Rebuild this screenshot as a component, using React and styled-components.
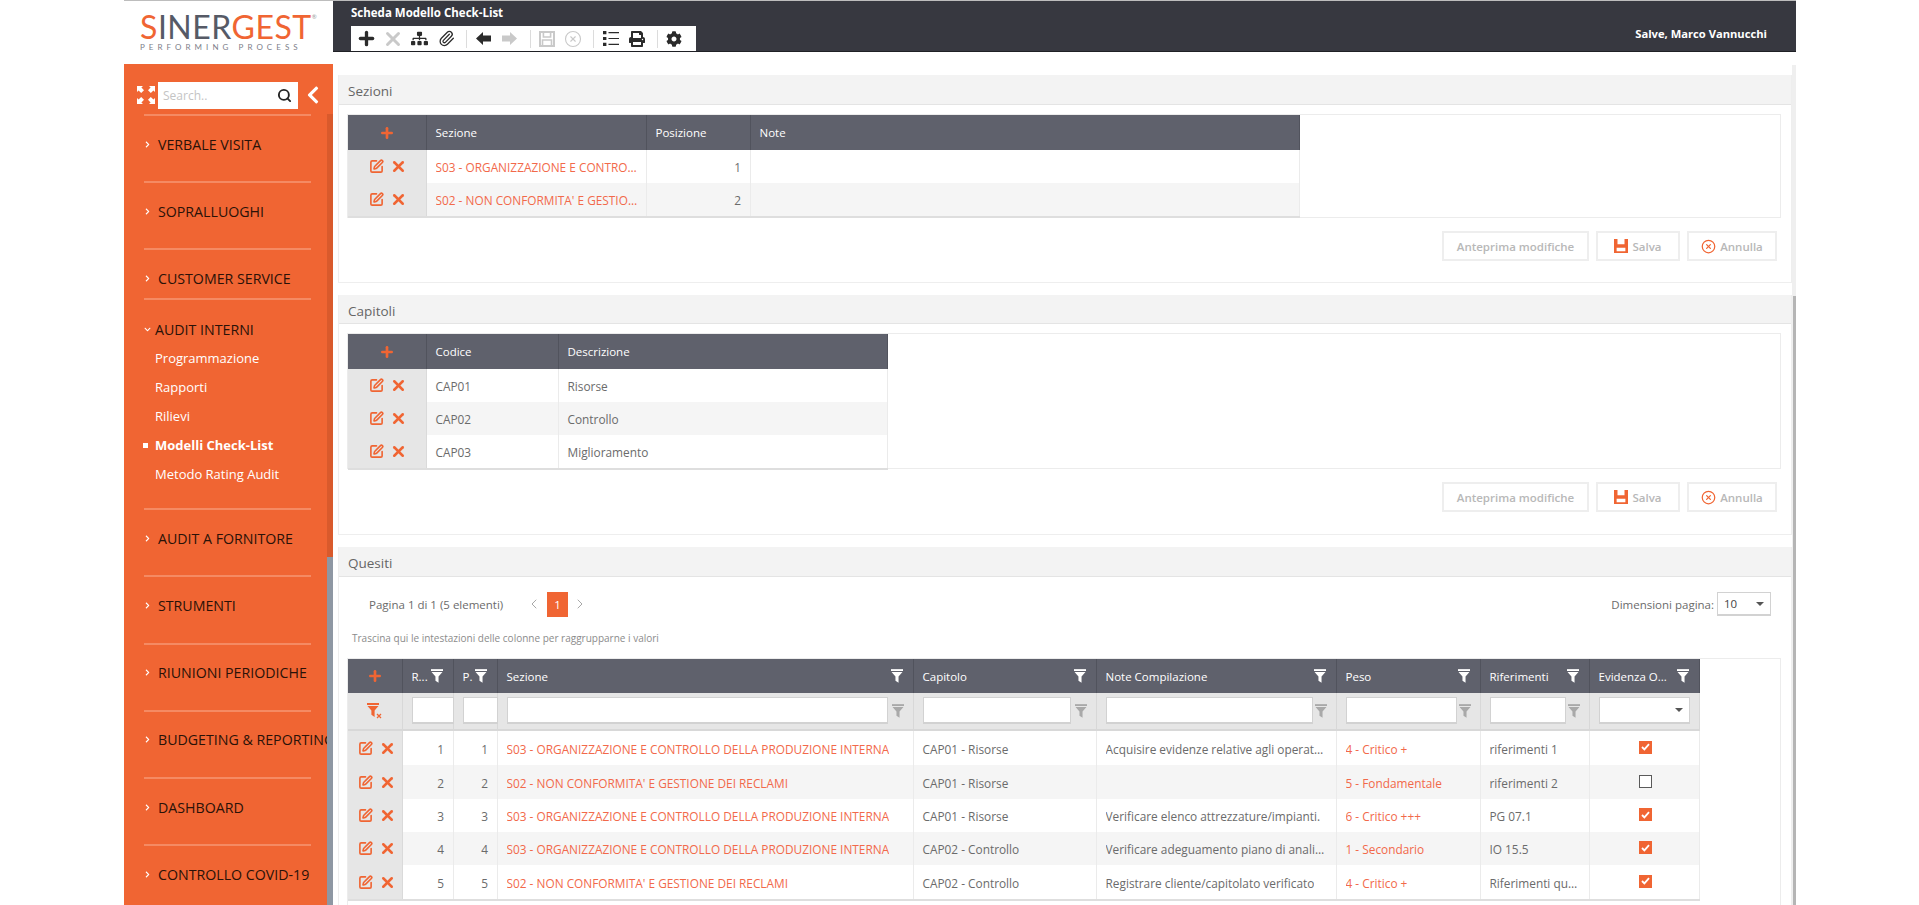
import React from "react";
import styled, { createGlobalStyle } from "styled-components";
import { SquarePen, X, Plus, Search, Paperclip, CircleX, ChevronLeft, ChevronRight } from "lucide-react";
import { FaSitemap, FaPrint, FaCog, FaChevronLeft, FaChevronRight, FaChevronDown } from "react-icons/fa";

const ORANGE = "#f06533";
const FONT = '"Open Sans", "Noto Sans", sans-serif';

const GlobalStyle = createGlobalStyle`
  html, body {
    margin: 0;
    padding: 0;
    background: #fff;
    overflow: hidden;
    font-family: ${FONT};
  }
  * { box-sizing: border-box; }
`;

const Shell = styled.div`
  width: 1672px;
  height: 905px;
  margin-left: 124px;
  display: grid;
  grid-template-columns: 209px 1fr;
  overflow: hidden;
  border-top: 1px solid #bdbdbd;
`;

const LeftColumn = styled.aside`
  display: flex;
  flex-direction: column;
  min-height: 0;
`;

const LogoBox = styled.div`
  height: 63px;
  padding: 11px 0 0 16px;
  flex-shrink: 0;
`;

const LogoWord = styled.div`
  font-family: "Lato", sans-serif;
  font-size: 32px;
  line-height: 30px;
  letter-spacing: 0.5px;
  color: #565a66;
  white-space: nowrap;
  sup { font-size: 6px; color: #999; vertical-align: 20px; line-height: 0; }
`;

const LogoAccent = styled.span`
  color: ${ORANGE};
`;

const LogoTag = styled.div`
  font-family: "Lato", sans-serif;
  font-size: 8px;
  line-height: 10px;
  letter-spacing: 4.05px;
  color: #7d808a;
  white-space: nowrap;
`;

const Sidebar = styled.div`
  flex: 1;
  min-height: 0;
  background: ${ORANGE};
  display: flex;
  flex-direction: column;
`;

const SearchRow = styled.div`
  height: 50px;
  flex-shrink: 0;
  padding: 18px 0 0 13px;
  display: flex;
  align-items: flex-start;
`;

const ExpandIcon = styled.svg`
  width: 18px;
  height: 18px;
  margin: 4px 3px 0 0;
  fill: #fff;
`;

const SearchBox = styled.div`
  width: 140px;
  height: 27px;
  background: #fff;
  display: flex;
  align-items: center;
  justify-content: space-between;
  padding: 0 6px 0 5px;
  color: #c4c4c4;
  font-size: 12px;
  svg { color: #222; }
`;

const CollapseBtn = styled.div`
  margin: 3px 0 0 5px;
  color: #fff;
  display: flex;
`;

const SideBody = styled.div`
  flex: 1;
  min-height: 0;
  display: flex;
`;

const Nav = styled.nav`
  width: 203px;
  overflow: hidden;
  padding-left: 20px;
`;

const NavItem = styled.div`
  width: 167px;
  height: ${(p) => p.$height}px;
  border-top: 2px solid #f58a63;
  padding-top: ${(p) => p.$top}px;
  overflow: visible;
  white-space: nowrap;
`;

const NavLabel = styled.div`
  display: flex;
  align-items: center;
  height: 20px;
  font-size: 14.2px;
  color: #2a1208;
  margin-bottom: 5px;
  svg { color: #fff; flex-shrink: 0; }
`;

const Caret = styled.span`
  width: ${(p) => p.$w || 14}px;
  display: flex;
  align-items: center;
  flex-shrink: 0;
`;

const SubItem = styled.div`
  height: 29px;
  line-height: 29px;
  padding-left: 11px;
  font-size: 13px;
  font-weight: ${(p) => (p.$active ? 700 : 400)};
  color: #fff;
  position: relative;
  &::before {
    content: "";
    display: ${(p) => (p.$active ? "block" : "none")};
    position: absolute;
    left: -1px;
    top: 12px;
    width: 5px;
    height: 5px;
    background: #fff;
  }
`;

const ScrollTrack = styled.div`
  width: 6px;
  background: #d95a2c;
  padding-top: 443px;
  display: flex;
`;

const ScrollThumb = styled.div`
  flex: 1;
  background: #8e97a3;
`;

const RightColumn = styled.main`
  min-width: 0;
  display: flex;
  flex-direction: column;
  position: relative;
`;

const TopBar = styled.header`
  height: 51px;
  flex-shrink: 0;
  background: #373840;
  border-bottom: 1px solid #1f2025;
  display: flex;
  justify-content: space-between;
  padding-left: 18px;
`;

const TitleBlock = styled.div`
  display: flex;
  flex-direction: column;
`;

const PageTitle = styled.div`
  height: 26px;
  padding-top: 4px;
  line-height: 16px;
  color: #fff;
  font-size: 11.5px;
  font-weight: 700;
`;

const Toolbar = styled.div`
  width: 345px;
  height: 26px;
  background: #fff;
  display: flex;
  align-items: center;
  padding-left: 2px;
`;

const ToolBtn = styled.div`
  width: 26.6px;
  height: 18px;
  display: flex;
  align-items: center;
  justify-content: center;
  color: ${(p) => (p.$off ? "#c9c9c9" : "#2b2b2b")};
`;

const ToolSep = styled.div`
  width: 1px;
  height: 18px;
  background: #dcdcdc;
  margin: 0 3px 0 6.5px;
`;

const Greeting = styled.div`
  padding: 25px 29px 0 0;
  color: #fff;
  font-size: 11.2px;
  font-weight: 700;
  line-height: 16px;
`;

const Content = styled.div`
  flex: 1;
  min-height: 0;
  padding: 23px 4px 0 5px;
  overflow: hidden;
`;

const SideRail = styled.div`
  position: absolute;
  right: 0;
  top: 64px;
  bottom: 0;
  width: 4px;
  background: #efefef;
  &::after {
    content: "";
    position: absolute;
    left: 1px;
    right: 0;
    top: 231px;
    bottom: 0;
    background: #b5b5b5;
  }
`;

const Panel = styled.section`
  border: 1px solid #eeeeee;
  border-top: 0;
  margin-bottom: 12px;
  height: ${(p) => p.$height}px;
  padding-bottom: 1px;
`;

const PanelTitle = styled.h3`
  margin: 0;
  height: ${(p) => p.$h || 30}px;
  background: #f3f3f3;
  border-bottom: 1px solid #e4e4e4;
  padding-left: 9px;
  font-size: 13.5px;
  font-weight: 400;
  line-height: 33px;
  color: #666;
`;

const GridBox = styled.div`
  margin: ${(p) => p.$mt || 9}px 10px 0 8px;
  height: ${(p) => p.$height}px;
  border: 1px solid #ececec;
`;

const Row = styled.div`
  display: grid;
  grid-template-columns: ${(p) => p.$cols};
  width: max-content;
  height: ${(p) => p.$h}px;
  background: ${(p) => (p.$alt ? "#f5f5f5" : "#fff")};
`;

const HeadCell = styled.div`
  background: #5f616c;
  border-right: 1px solid #51535d;
  color: #fff;
  font-size: 11.5px;
  display: flex;
  align-items: center;
  justify-content: ${(p) => (p.$center ? "center" : "space-between")};
  padding: ${(p) => (p.$center ? "0" : "0 10px 0 8.5px")};
  white-space: nowrap;
  overflow: hidden;
  color: #fff;
  svg { flex-shrink: 0; }
`;

const FilterCell = styled.div`
  background: #e6e6e6;
  border-right: 1px solid #d8d8d8;
  border-bottom: 2px solid #d8d8d8;
  padding: 0 0 1px ${(p) => p.$pad ?? 8}px;
  display: flex;
  align-items: center;
  justify-content: ${(p) => (p.$center ? "center" : "space-between")};
`;

const FilterInput = styled.div`
  width: ${(p) => p.$w}px;
  height: 27px;
  background: #fff;
  border: 1px solid #d2d2d2;
  border-bottom-width: 2px;
  display: flex;
  align-items: center;
  justify-content: flex-end;
  padding-right: 6px;
  flex-shrink: 0;
`;

const FilterIconSlot = styled.span`
  margin-right: 9px;
  display: flex;
`;

const ActionCell = styled.div`
  background: #e6e6e6;
  border-right: 1px solid #dadada;
  display: flex;
  align-items: center;
  justify-content: center;
  gap: 6px;
  padding-left: ${(p) => p.$pad || 0}px;
  color: ${ORANGE};
`;

const Cell = styled.div`
  border-right: 1px solid #ebebeb;
  padding: 1px 7px 0 8.5px;
  font-size: 11.85px;
  color: ${(p) => (p.$link ? "#f2694a" : "#6b6b6b")};
  text-align: ${(p) => (p.$right ? "right" : "left")};
  display: flex;
  align-items: center;
  justify-content: ${(p) => (p.$right ? "flex-end" : p.$center ? "center" : "flex-start")};
  white-space: nowrap;
  overflow: hidden;
  span { overflow: hidden; text-overflow: ellipsis; }
`;

const NumberCell = styled(Cell)`
  padding-right: 9px;
`;

const GridEnd = styled.div`
  height: 2px;
  width: ${(p) => p.$w}px;
  background: #dedede;
`;

const Buttons = styled.div`
  display: flex;
  justify-content: flex-end;
  gap: 7px;
  padding: 13px 14px 0 0;
`;

const Button = styled.div`
  width: ${(p) => p.$w}px;
  height: 30px;
  border: 2px solid #eeeeee;
  display: flex;
  align-items: center;
  justify-content: center;
  gap: 4px;
  color: #b8b8b8;
  font-size: 11.5px;
  font-weight: 600;
  svg { color: ${ORANGE}; }
`;

const Pager = styled.div`
  display: flex;
  align-items: center;
  justify-content: space-between;
  height: 24px;
  margin-top: 15px;
  padding: 0 20px 0 30px;
  font-size: 11.5px;
  color: #6b6b6b;
`;

const PagerLeft = styled.div`
  display: flex;
  align-items: center;
  svg { color: #a8a8a8; }
`;

const PagerInfo = styled.span`
  width: 157px;
`;

const PageBadge = styled.div`
  width: 21px;
  height: 25px;
  margin: 0 4px 0 5px;
  background: ${ORANGE};
  color: #fff;
  display: flex;
  align-items: center;
  justify-content: center;
`;

const PagerRight = styled.div`
  display: flex;
  align-items: center;
  gap: 3px;
`;

const PageSize = styled.div`
  width: 54px;
  height: 24px;
  border: 1px solid #d2d2d2;
  border-bottom-width: 2px;
  display: flex;
  align-items: center;
  justify-content: space-between;
  padding: 0 6px;
  color: #444;
`;

const SmallCaret = styled.span`
  width: 0;
  height: 0;
  border-left: 4px solid transparent;
  border-right: 4px solid transparent;
  border-top: 4px solid #555;
`;

const DragHint = styled.div`
  height: 18px;
  margin: 13px 0 0 13px;
  line-height: 18px;
  font-size: 10px;
  color: #8b8b8b;
`;

const CheckBox = styled.span`
  width: 13px;
  height: 13px;
  margin-top: -3px;
  background: ${(p) => (p.$on ? ORANGE : "#fff")};
  border: 1px solid ${(p) => (p.$on ? ORANGE : "#5a5a5a")};
  display: flex;
  align-items: center;
  justify-content: center;
`;

const FilterSvg = ({ color = "#fff" }) => (
  <svg width="12" height="14" viewBox="0 0 14 16" fill={color}>
    <path d="M0 0h14v2.2H0z" />
    <path d="M.6 3.4h12.8L8.8 8.6V16l-3.6-2.6V8.6z" />
  </svg>
);

const ClearFilter = () => (
  <svg width="16" height="16" viewBox="0 0 16 16">
    <path fill={ORANGE} d="M0 0h12v2H0zM.5 3h11L7.6 7.5V14l-3.2-2.2V7.5z" />
    <path stroke={ORANGE} strokeWidth="1.3" d="M10 11l4 4M14 11l-4 4" />
  </svg>
);

const FloppyIcon = ({ solid, size = 14 }) => (
  <svg width={size} height={size} viewBox="0 0 16 16" fill="none">
    <path d="M1 1h14v14H1z" stroke="currentColor" strokeWidth="2" fill={solid ? "currentColor" : "none"} />
    {solid ? (
      <path d="M4 0h8v6H4zM3 10h10v4H3z" fill="#fff" />
    ) : (
      <path d="M4.4 1v5h7.2V1M3.5 15v-6h9v6" stroke="currentColor" strokeWidth="1.6" />
    )}
  </svg>
);

const ArrowSvg = ({ flip }) => (
  <svg width="15" height="13" viewBox="0 0 15 13" fill="currentColor" transform={flip ? "scale(-1 1)" : undefined}>
    <path d="M0 6.5L7 0v3.5h8v6H7V13z" />
  </svg>
);

const ListSvg = () => (
  <svg width="16" height="15" viewBox="0 0 16 15" fill="currentColor">
    <path d="M0 0h3.4v3.2H0zM0 5.9h3.4v3.2H0zM0 11.8h3.4V15H0z" />
    <path d="M5.5 1h10.5v1.2H5.5zM5.5 6.9h10.5v1.2H5.5zM5.5 12.8h10.5V14H5.5z" />
  </svg>
);

const EditDelete = ({ pad = 2 }) => (
  <ActionCell $pad={pad}>
    <SquarePen size={15} strokeWidth={2.6} />
    <X size={17} strokeWidth={3.6} />
  </ActionCell>
);

const AddHead = () => (
  <HeadCell $center>
    <Plus size={16} color={ORANGE} strokeWidth={4} />
  </HeadCell>
);

const FormButtons = () => (
  <Buttons>
    <Button $w={147}>Anteprima modifiche</Button>
    <Button $w={84}>
      <FloppyIcon solid />
      Salva
    </Button>
    <Button $w={90}>
      <CircleX size={15} strokeWidth={2} />
      Annulla
    </Button>
  </Buttons>
);

const navBefore = [
  { label: "VERBALE VISITA", height: 67 },
  { label: "SOPRALLUOGHI", height: 67 },
  { label: "CUSTOMER SERVICE", height: 50 },
];

const auditLinks = ["Programmazione", "Rapporti", "Rilievi", "Modelli Check-List", "Metodo Rating Audit"];

const navAfter = ["AUDIT A FORNITORE", "STRUMENTI", "RIUNIONI PERIODICHE", "BUDGETING & REPORTING", "DASHBOARD", "CONTROLLO COVID-19"];

const sezioniCols = "79px 220px 104px 549px";
const sezioni = [
  { name: "S03 - ORGANIZZAZIONE E CONTROLLO", pos: 1 },
  { name: "S02 - NON CONFORMITA' E GESTIONE DEI RECLAMI", pos: 2 },
];

const capitoliCols = "79px 132px 329px";
const capitoli = [
  ["CAP01", "Risorse"],
  ["CAP02", "Controllo"],
  ["CAP03", "Miglioramento"],
];

const quesitiCols = "55px 51px 44px 416px 183px 240px 144px 109px 110px";
const S03 = "S03 - ORGANIZZAZIONE E CONTROLLO DELLA PRODUZIONE INTERNA";
const S02 = "S02 - NON CONFORMITA' E GESTIONE DEI RECLAMI";
const quesiti = [
  { n: 1, sez: S03, cap: "CAP01 - Risorse", note: "Acquisire evidenze relative agli operatori coinvolti", peso: "4 - Critico +", rif: "riferimenti 1", ev: true, h: 34 },
  { n: 2, sez: S02, cap: "CAP01 - Risorse", note: "", peso: "5 - Fondamentale", rif: "riferimenti 2", ev: false, h: 34 },
  { n: 3, sez: S03, cap: "CAP01 - Risorse", note: "Verificare elenco attrezzature/impianti.", peso: "6 - Critico +++", rif: "PG 07.1", ev: true, h: 33 },
  { n: 4, sez: S03, cap: "CAP02 - Controllo", note: "Verificare adeguamento piano di analisi periodico", peso: "1 - Secondario", rif: "IO 15.5", ev: true, h: 33 },
  { n: 5, sez: S02, cap: "CAP02 - Controllo", note: "Registrare cliente/capitolato verificato", peso: "4 - Critico +", rif: "Riferimenti questito", ev: true, h: 34 },
];

const filterWidths = [42, 35, 381, 148, 207, 111, 76];

const App = () => (
  <>
    <GlobalStyle />
    <Shell>
      <LeftColumn>
        <LogoBox>
          <LogoWord>
            <LogoAccent>S</LogoAccent>INER<LogoAccent>GEST</LogoAccent>
            <sup>®</sup>
          </LogoWord>
          <LogoTag>PERFORMING PROCESS</LogoTag>
        </LogoBox>
        <Sidebar>
          <SearchRow>
            <ExpandIcon viewBox="0 0 18 18">
              <path d="M0 0h6L4.4 1.6 7 4.2 4.2 7 1.6 4.4 0 6zM18 0v6l-1.6-1.6L13.8 7 11 4.2l2.6-2.6L12 0zM0 18v-6l1.6 1.6L4.2 11 7 13.8l-2.6 2.6L6 18zM18 18h-6l1.6-1.6L11 13.8l2.8-2.8 2.6 2.6L18 12z" />
            </ExpandIcon>
            <SearchBox>
              Search..
              <Search size={15} strokeWidth={3} />
            </SearchBox>
            <CollapseBtn>
              <FaChevronLeft size={20} />
            </CollapseBtn>
          </SearchRow>
          <SideBody>
            <Nav>
              {navBefore.map((item) => (
                <NavItem key={item.label} $height={item.height} $top={18}>
                  <NavLabel>
                    <Caret>
                      <FaChevronRight size={7} />
                    </Caret>
                    {item.label}
                  </NavLabel>
                </NavItem>
              ))}
              <NavItem $height={210} $top={19}>
                <NavLabel>
                  <Caret $w={11}>
                    <FaChevronDown size={7} />
                  </Caret>
                  AUDIT INTERNI
                </NavLabel>
                {auditLinks.map((link) => (
                  <SubItem key={link} $active={link === "Modelli Check-List"}>
                    {link}
                  </SubItem>
                ))}
              </NavItem>
              {navAfter.map((label) => (
                <NavItem key={label} $height={67.3} $top={18}>
                  <NavLabel>
                    <Caret>
                      <FaChevronRight size={7} />
                    </Caret>
                    {label}
                  </NavLabel>
                </NavItem>
              ))}
            </Nav>
            <ScrollTrack>
              <ScrollThumb />
            </ScrollTrack>
          </SideBody>
        </Sidebar>
      </LeftColumn>

      <RightColumn>
        <TopBar>
          <TitleBlock>
            <PageTitle>Scheda Modello Check-List</PageTitle>
            <Toolbar>
              <ToolBtn><Plus size={21} strokeWidth={3.8} /></ToolBtn>
              <ToolBtn $off><X size={22} strokeWidth={3.2} /></ToolBtn>
              <ToolBtn><FaSitemap size={17} /></ToolBtn>
              <ToolBtn><Paperclip size={17} strokeWidth={1.8} /></ToolBtn>
              <ToolSep />
              <ToolBtn><ArrowSvg /></ToolBtn>
              <ToolBtn $off><ArrowSvg flip /></ToolBtn>
              <ToolSep />
              <ToolBtn $off><FloppyIcon size={16} /></ToolBtn>
              <ToolBtn $off><CircleX size={18} strokeWidth={1.5} /></ToolBtn>
              <ToolSep />
              <ToolBtn><ListSvg /></ToolBtn>
              <ToolBtn><FaPrint size={16} /></ToolBtn>
              <ToolSep />
              <ToolBtn><FaCog size={16} /></ToolBtn>
            </Toolbar>
          </TitleBlock>
          <Greeting>Salve, Marco Vannucchi</Greeting>
        </TopBar>

        <Content>
          <Panel $height={208}>
            <PanelTitle>Sezioni</PanelTitle>
            <GridBox $height={104}>
              <Row $cols={sezioniCols} $h={35}>
                <AddHead />
                <HeadCell>Sezione</HeadCell>
                <HeadCell>Posizione</HeadCell>
                <HeadCell>Note</HeadCell>
              </Row>
              {sezioni.map((s, i) => (
                <Row key={s.pos} $cols={sezioniCols} $h={33} $alt={i % 2 === 1}>
                  <EditDelete />
                  <Cell $link><span>{s.name}</span></Cell>
                  <NumberCell $right>{s.pos}</NumberCell>
                  <Cell />
                </Row>
              ))}
              <GridEnd $w={952} />
            </GridBox>
            <FormButtons />
          </Panel>

          <Panel $height={240}>
            <PanelTitle $h={29}>Capitoli</PanelTitle>
            <GridBox $height={136}>
              <Row $cols={capitoliCols} $h={35}>
                <AddHead />
                <HeadCell>Codice</HeadCell>
                <HeadCell>Descrizione</HeadCell>
              </Row>
              {capitoli.map(([code, desc], i) => (
                <Row key={code} $cols={capitoliCols} $h={33} $alt={i % 2 === 1}>
                  <EditDelete />
                  <Cell>{code}</Cell>
                  <Cell>{desc}</Cell>
                </Row>
              ))}
              <GridEnd $w={540} />
            </GridBox>
            <FormButtons />
          </Panel>

          <Panel $height={370}>
            <PanelTitle>Quesiti</PanelTitle>
            <Pager>
              <PagerLeft>
                <PagerInfo>Pagina 1 di 1 (5 elementi)</PagerInfo>
                <ChevronLeft size={16} strokeWidth={1.5} />
                <PageBadge>1</PageBadge>
                <ChevronRight size={16} strokeWidth={1.5} />
              </PagerLeft>
              <PagerRight>
                Dimensioni pagina:
                <PageSize>
                  10
                  <SmallCaret />
                </PageSize>
              </PagerRight>
            </Pager>
            <DragHint>Trascina qui le intestazioni delle colonne per raggrupparne i valori</DragHint>
            <GridBox $height={260} $mt={11}>
              <Row $cols={quesitiCols} $h={34}>
                <AddHead />
                {["R...", "P.", "Sezione", "Capitolo", "Note Compilazione", "Peso", "Riferimenti", "Evidenza O..."].map((h) => (
                  <HeadCell key={h}>
                    {h}
                    <FilterSvg />
                  </HeadCell>
                ))}
              </Row>
              <Row $cols={quesitiCols} $h={38}>
                <FilterCell $center $pad={0}>
                  <ClearFilter />
                </FilterCell>
                {filterWidths.map((w, i) => (
                  <FilterCell key={i} $pad={8.5}>
                    <FilterInput $w={w} />
                    {i > 1 && (
                      <FilterIconSlot>
                        <FilterSvg color="#a9a9a9" />
                      </FilterIconSlot>
                    )}
                  </FilterCell>
                ))}
                <FilterCell $pad={9}>
                  <FilterInput $w={91}>
                    <SmallCaret />
                  </FilterInput>
                </FilterCell>
              </Row>
              {quesiti.map((q, i) => (
                <Row key={q.n} $cols={quesitiCols} $h={q.h} $alt={i % 2 === 1}>
                  <EditDelete pad={4} />
                  <NumberCell $right>{q.n}</NumberCell>
                  <NumberCell $right>{q.n}</NumberCell>
                  <Cell $link><span>{q.sez}</span></Cell>
                  <Cell>{q.cap}</Cell>
                  <Cell><span>{q.note}</span></Cell>
                  <Cell $link><span>{q.peso}</span></Cell>
                  <Cell><span>{q.rif}</span></Cell>
                  <Cell $center>
                    <CheckBox $on={q.ev}>
                      {q.ev && (
                        <svg width="9" height="8" viewBox="0 0 9 8" fill="none" stroke="#fff" strokeWidth="1.8">
                          <path d="M1 4l2.4 2.4L8 1.2" />
                        </svg>
                      )}
                    </CheckBox>
                  </Cell>
                </Row>
              ))}
              <GridEnd $w={1352} />
            </GridBox>
          </Panel>
        </Content>
        <SideRail />
      </RightColumn>
    </Shell>
  </>
);

export default App;
